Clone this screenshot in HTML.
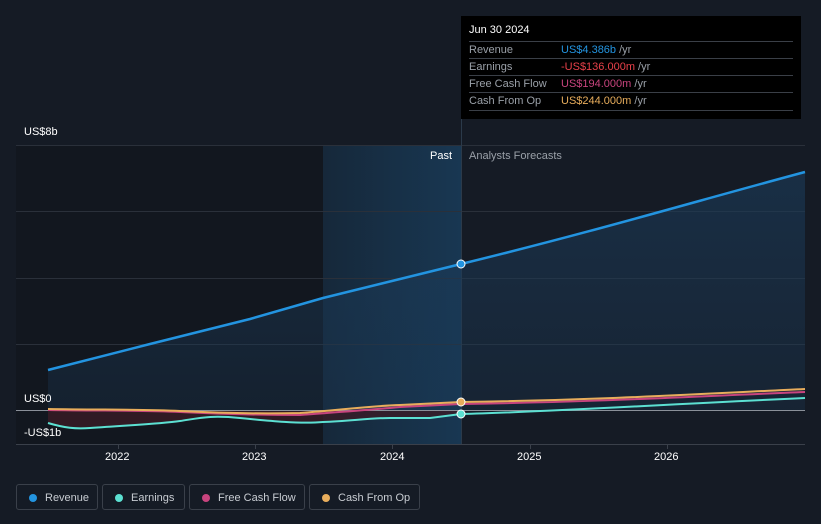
<!DOCTYPE html>
<html><head><meta charset="utf-8"><style>
body{margin:0;width:821px;height:524px;background:#151b25;font-family:"Liberation Sans",sans-serif;overflow:hidden;position:relative}
.t{position:absolute;font-size:11px;color:#fff}
.tip{position:absolute;left:461px;top:16px;width:340px;height:103px;background:#000}
.tip .h{position:absolute;left:8px;top:8px;font-size:11px;color:#fff}
.row{position:absolute;left:8px;width:324px;border-top:1px solid #3a3f47;height:17px;font-size:11px;color:#9aa0a8;line-height:17px}
.row span{position:absolute;left:92px}
.leg{position:absolute;top:484px;height:26px;border:1px solid #3a404a;border-radius:3px;font-size:11px;color:#c8ccd2;line-height:26px;box-sizing:border-box}
.leg i{position:absolute;left:12px;top:9px;width:8px;height:8px;border-radius:50%}
.leg b{font-weight:normal;position:absolute;left:28px}
</style></head><body>
<svg width="821" height="524" style="position:absolute;left:0;top:0">
<defs>
<linearGradient id="hl" x1="0" x2="1"><stop offset="0" stop-color="#16283a"/><stop offset="1" stop-color="#183752"/></linearGradient>
<linearGradient id="rv" x1="0" y1="0" x2="0" y2="1"><stop offset="0" stop-color="#1b3a58" stop-opacity=".9"/><stop offset="1" stop-color="#1b3a58" stop-opacity=".4"/></linearGradient>
</defs>
<rect x="16" y="145" width="307" height="299" fill="#12171f"/>
<rect x="323" y="145" width="138" height="299" fill="url(#hl)"/>
<g stroke="#2a303a" stroke-width="1">
<line x1="16" y1="145.5" x2="805" y2="145.5"/><line x1="16" y1="211.5" x2="805" y2="211.5"/><line x1="16" y1="278.5" x2="805" y2="278.5"/><line x1="16" y1="344.5" x2="805" y2="344.5"/>
</g>
<line x1="16" y1="444.5" x2="805" y2="444.5" stroke="#3a404a"/>
<line x1="461.5" y1="16" x2="461.5" y2="444" stroke="#2b3a4a"/>
<path d="M48 370 L150 344 L250 319 L323 298 L461 264 C600 230 700 200 805 172 L805 410 L48 410Z" fill="url(#rv)" opacity=".7"/>
<path d="M48 410 L48 423 C70 430 90 428 130 425 C170 420 190 422 210 416 C250 418 290 424 323 422 C370 420 400 418 430 418 L461 414 L461 410Z" fill="#3a1c26" opacity=".8"/>
<line x1="16" y1="410.5" x2="805" y2="410.5" stroke="#8a9099"/>
<path d="M48 370 L150 344 L250 319 L323 298 L461 264 C600 230 700 200 805 172" fill="none" stroke="#2394e0" stroke-width="2.5" stroke-linejoin="round"/>
<path d="M48 423 C65 428 75 429 90 428 C130 425 160 424 180 421 C200 418 210 415 240 418 C270 421 300 424 323 422 C350 421 370 418 390 418 L430 418 L461 414 C550 412 650 405 805 398" fill="none" stroke="#5ce0d2" stroke-width="2"/>
<path d="M48 410 C100 411 140 410 180 412 C220 414 260 415 300 415 C340 412 370 410 400 407 L461 404 C600 402 700 396 805 392" fill="none" stroke="#c8447e" stroke-width="2"/>
<path d="M48 409 C100 410 140 409 180 411 C220 413 260 414 300 413 C340 410 370 406 400 405 L461 402 C600 400 700 394 805 389" fill="none" stroke="#e8ad5c" stroke-width="2"/>
<circle cx="461" cy="264" r="4" fill="#2394e0" stroke="#fff" stroke-width="1"/>
<circle cx="461" cy="414" r="4" fill="#5ce0d2" stroke="#fff" stroke-width="1"/>
<circle cx="461" cy="402" r="4" fill="#e8ad5c" stroke="#fff" stroke-width="1"/>
<g stroke="#3a404a"><line x1="118.5" y1="444" x2="118.5" y2="449"/><line x1="255.5" y1="444" x2="255.5" y2="449"/><line x1="392.5" y1="444" x2="392.5" y2="449"/><line x1="530.5" y1="444" x2="530.5" y2="449"/><line x1="667.5" y1="444" x2="667.5" y2="449"/></g>
</svg>
<div class="t" style="left:24px;top:126px">US$8b</div>
<div class="t" style="left:24px;top:393px">US$0</div>
<div class="t" style="left:24px;top:427px">-US$1b</div>
<div class="t" style="left:430px;top:150px">Past</div>
<div class="t" style="left:469px;top:150px;color:#9aa0a8">Analysts Forecasts</div>
<div class="t" style="left:105px;top:451px">2022</div>
<div class="t" style="left:242px;top:451px">2023</div>
<div class="t" style="left:380px;top:451px">2024</div>
<div class="t" style="left:517px;top:451px">2025</div>
<div class="t" style="left:654px;top:451px">2026</div>
<div class="tip"><div class="h">Jun 30 2024</div>
<div class="row" style="top:25px">Revenue<span style="color:#2394e0">US$4.386b <em style="font-style:normal;color:#9aa0a8">/yr</em></span></div>
<div class="row" style="top:42px">Earnings<span style="color:#e8414a">-US$136.000m <em style="font-style:normal;color:#9aa0a8">/yr</em></span></div>
<div class="row" style="top:59px">Free Cash Flow<span style="color:#c8447e">US$194.000m <em style="font-style:normal;color:#9aa0a8">/yr</em></span></div>
<div class="row" style="top:76px;border-bottom:1px solid #3a3f47">Cash From Op<span style="color:#e8ad5c">US$244.000m <em style="font-style:normal;color:#9aa0a8">/yr</em></span></div>
</div>
<div class="leg" style="left:16px;width:82px"><i style="background:#2394e0"></i><b>Revenue</b></div>
<div class="leg" style="left:102px;width:83px"><i style="background:#5ce0d2"></i><b>Earnings</b></div>
<div class="leg" style="left:189px;width:116px"><i style="background:#c8447e"></i><b>Free Cash Flow</b></div>
<div class="leg" style="left:309px;width:111px"><i style="background:#e8ad5c"></i><b>Cash From Op</b></div>
</body></html>
